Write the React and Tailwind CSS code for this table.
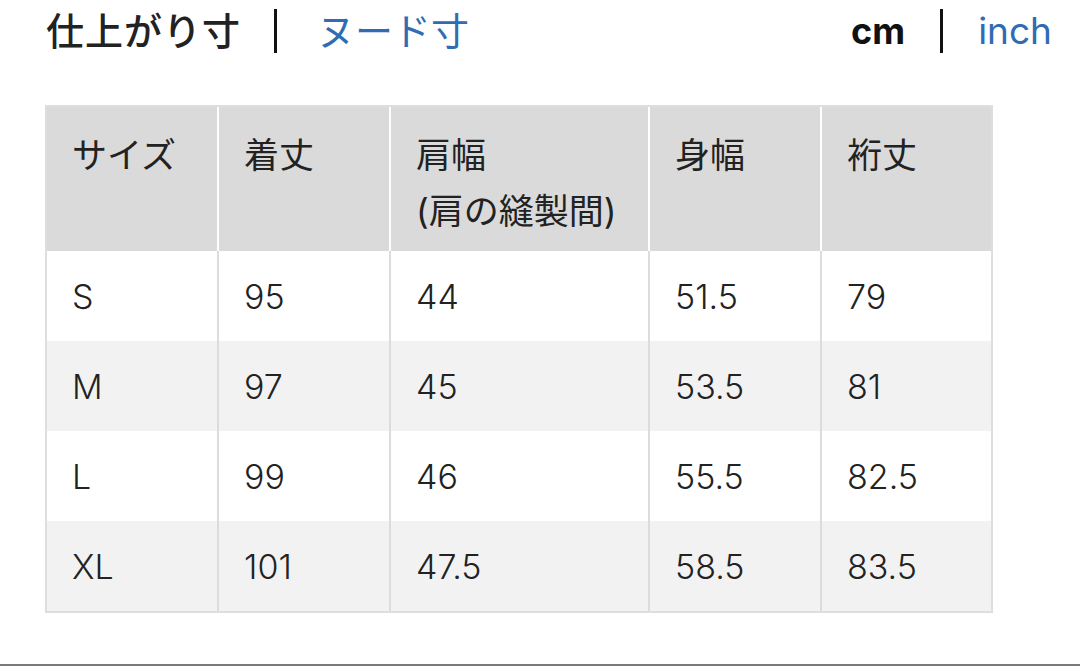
import React from 'react'

const font = { fontFamily: '"Inter", "Noto Sans CJK JP", sans-serif' }

const headers = [
  ['サイズ'],
  ['着丈'],
  ['肩幅', '(肩の縫製間)'],
  ['身幅'],
  ['裄丈'],
]

const rows = [
  ['S', '95', '44', '51.5', '79'],
  ['M', '97', '45', '53.5', '81'],
  ['L', '99', '46', '55.5', '82.5'],
  ['XL', '101', '47.5', '58.5', '83.5'],
]

const cols = 'grid grid-cols-[170px_170px_257px_170px_169px] gap-x-[2px]'

const App = () => {
  return (
    <div className="w-[1080px] h-[666px] bg-white flex flex-col text-[#222]" style={font}>
      {/* Tabs */}
      <div className="h-[62px] flex items-center justify-between pl-[46px] pr-[28px]">
        <div className="flex items-center">
          <span className="text-[38px] font-medium tracking-[1px]">仕上がり寸</span>
          <div className="w-[3px] h-[44px] bg-[#111] ml-[33px] mr-[40px]" />
          <span className="text-[38px] text-[#2f6cb3]">ヌード寸</span>
        </div>
        <div className="flex items-center">
          <span className="text-[36px] font-bold text-[#111]">cm</span>
          <div className="w-[3px] h-[44px] bg-[#111] ml-[35px] mr-[35px]" />
          <span className="text-[37px] text-[#2f6cb3]">inch</span>
        </div>
      </div>

      {/* Table */}
      <div className="ml-[45px] mt-[43px] w-[948px] border-2 border-[#dedede]">
        <div className={`${cols} bg-white`}>
          {headers.map((h, i) => (
            <div key={i} className="bg-[#dadada] h-[144px] pl-[25px] pt-[20px] text-[35px] leading-[56px]">
              {h.map((line, j) => (
                <div key={j}>{line}</div>
              ))}
            </div>
          ))}
        </div>
        {rows.map((r, i) => (
          <div key={i} className={`${cols} bg-[#dcdcdc]`}>
            {r.map((c, j) => (
              <div
                key={j}
                className={`h-[90px] flex items-center pl-[25px] text-[34px] font-light ${i % 2 === 0 ? 'bg-white' : 'bg-[#f2f2f2]'}`}
              >
                {c}
              </div>
            ))}
          </div>
        ))}
      </div>

      <div className="mt-auto h-[2px] bg-[#7a7a7a]" />
    </div>
  )
}

export default App
